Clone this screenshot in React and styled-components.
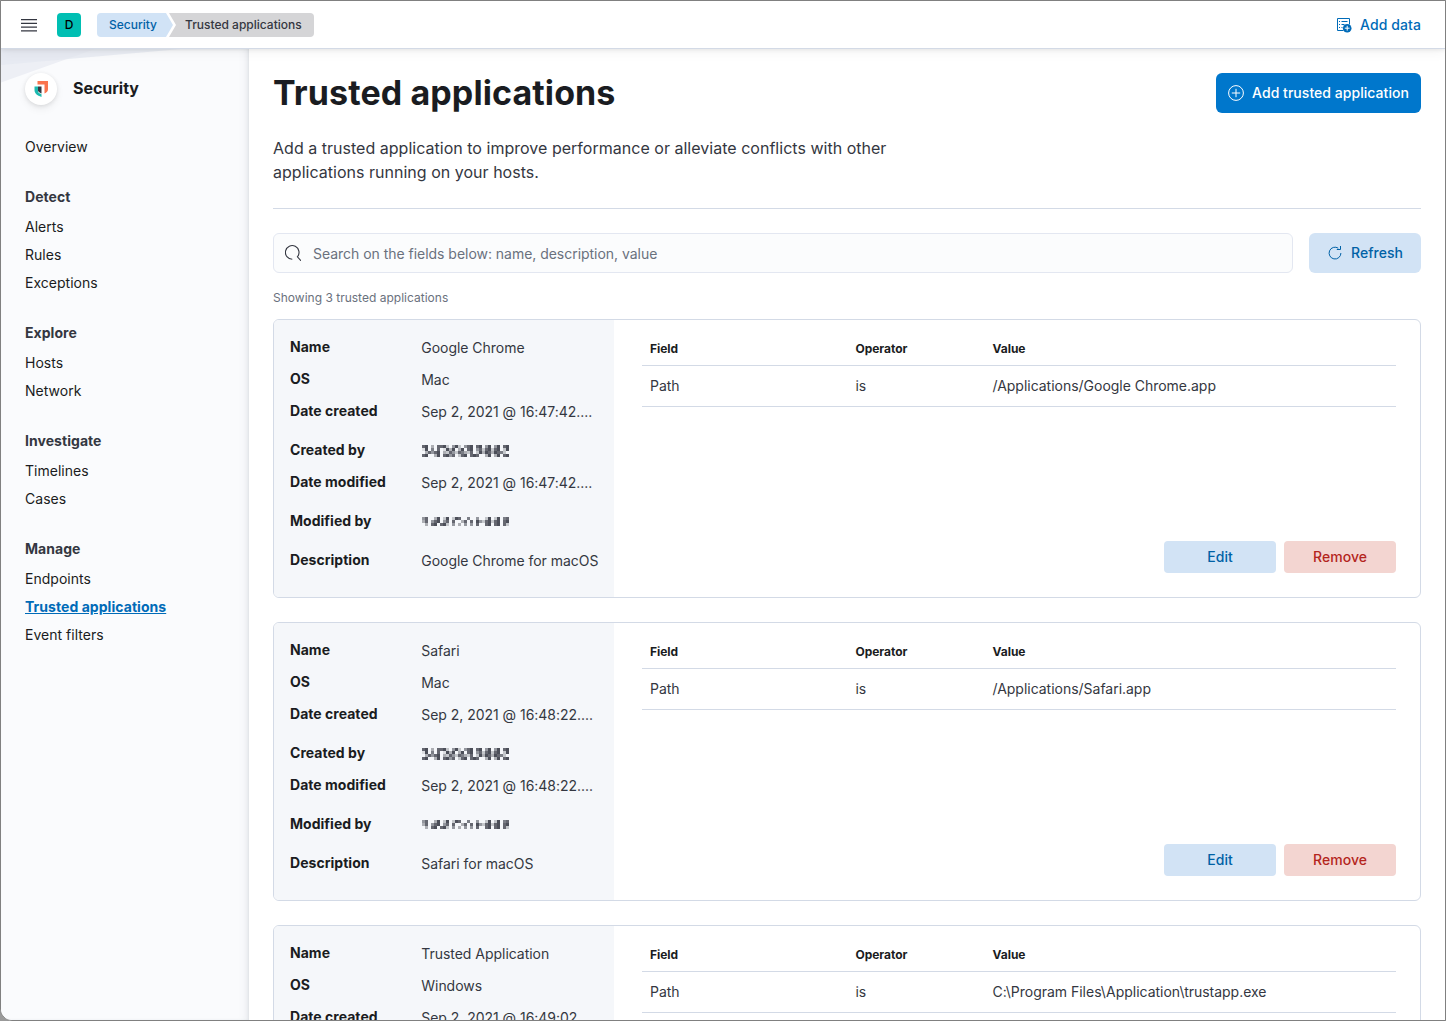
import React from "react";
import styled, { createGlobalStyle, css } from "styled-components";

const GlobalStyle = createGlobalStyle`
  *, *::before, *::after { box-sizing: border-box; }
  html, body { margin: 0; padding: 0; overflow: hidden; }
  body {
    background: #9a9a9a;
    font-family: Inter, "Liberation Sans", sans-serif;
    font-size: 14px;
    line-height: 20px;
    color: #343741;
    letter-spacing: 0;
  }
`;

const Window = styled.div`
  height: 1021px;
  border: 1px solid #808080;
  border-bottom-left-radius: 12px;
  background: #fff;
  overflow: hidden;
  display: flex;
  flex-direction: column;
`;

const Header = styled.header`
  position: relative;
  z-index: 2;
  flex: none;
  height: 48px;
  padding: 1px 24px 0 20px;
  display: flex;
  align-items: center;
  background: #fff;
  border-bottom: 1px solid #d3dae6;
  box-shadow: 0 1px 4px rgba(0, 0, 0, 0.08), 0 3px 12px rgba(0, 0, 0, 0.05);
`;

const MenuIcon = styled.svg`
  display: block;
  width: 16px;
  height: 16px;
`;

const SpaceAvatar = styled.div`
  width: 24px;
  height: 24px;
  margin: 0 16px 0 20px;
  border-radius: 4px;
  background: #00bfb3;
  color: #000;
  font-size: 12px;
  font-weight: 500;
  line-height: 24px;
  text-align: center;
`;

const Breadcrumbs = styled.nav`
  display: flex;
  font-size: 12px;
  font-weight: 500;
  line-height: 24px;
`;

const Crumb = styled.span`
  height: 24px;
  white-space: nowrap;
  ${({ $last }) =>
    $last
      ? css`
          width: 145px;
          margin-left: -4px;
          padding-left: 16px;
          background: #d5d5d7;
          color: #343741;
          border-radius: 0 4px 4px 0;
          clip-path: polygon(0 0, 100% 0, 100% 100%, 0 100%, 7px 50%);
        `
      : css`
          width: 76px;
          padding-left: 12px;
          background: #d1e3f6;
          color: #0061a6;
          border-radius: 4px 0 0 4px;
          clip-path: polygon(0 0, 69px 0, 100% 50%, 69px 100%, 0 100%);
        `}
`;

const AddData = styled.a`
  margin-left: auto;
  display: flex;
  align-items: center;
  gap: 8px;
  color: #006bb8;
  font-weight: 500;
  letter-spacing: 0.08px;
`;

const Body = styled.div`
  flex: 1;
  min-height: 0;
  display: flex;
`;

const Sidebar = styled.aside`
  flex: none;
  position: relative;
  width: 248px;
  padding: 24px;
  background: #fafbfd;
  box-shadow: inset -8px 0 8px -6px rgba(90, 100, 120, 0.13), inset -1px 0 2px rgba(90, 100, 120, 0.08);
`;

const Backdrop = styled.svg`
  position: absolute;
  left: 0;
  top: 0;
  width: 248px;
  height: 40px;
`;

const Brand = styled.div`
  position: relative;
  display: flex;
  align-items: center;
  gap: 16px;
  height: 32px;
`;

const BrandName = styled.span`
  padding-bottom: 2px;
  color: #1a1c21;
  font-size: 16px;
  font-weight: 700;
  letter-spacing: -0.03px;
`;

const BrandBadge = styled.span`
  width: 32px;
  height: 32px;
  border-radius: 50%;
  background: #fff;
  display: flex;
  align-items: center;
  justify-content: center;
  box-shadow: 0 1px 4px rgba(0, 0, 0, 0.1), 0 4px 8px rgba(0, 0, 0, 0.06);
`;

const NavGroup = styled.section`
  margin-top: ${({ $first }) => ($first ? "28px" : "24px")};
`;

const NavTitle = styled.h3`
  margin: 0 0 4px;
  font-size: 14px;
  font-weight: 700;
  line-height: 24px;
  letter-spacing: 0.05px;
  color: #343741;
`;

const NavLink = styled.a`
  display: block;
  height: 28px;
  line-height: 28px;
  color: #1a1c21;
  letter-spacing: 0.02px;
  ${({ $active }) =>
    $active &&
    css`
      color: #006bb8;
      font-weight: 700;
      letter-spacing: 0.05px;
      text-decoration: underline;
    `}
`;

const Main = styled.main`
  flex: 1;
  min-width: 0;
  padding: 24px 24px 0;
`;

const PageHeader = styled.div`
  display: flex;
  justify-content: space-between;
  align-items: flex-start;
  height: 136px;
  border-bottom: 1px solid #d3dae6;
`;

const Title = styled.h1`
  margin: 0;
  font-size: 34px;
  font-weight: 700;
  line-height: 40px;
  letter-spacing: 0.1px;
  color: #1a1c21;
`;

const Lead = styled.p`
  margin: 23px 0 0;
  width: 640px;
  font-size: 16px;
  line-height: 24px;
  letter-spacing: 0.02px;
`;

const tones = {
  solid: css`background: #0077cc; color: #fff;`,
  primary: css`background: #d2e3f5; color: #0061a6;`,
  danger: css`background: #f3d5d1; color: #b4251d;`,
};

const Button = styled.button`
  flex: none;
  display: flex;
  align-items: center;
  justify-content: center;
  gap: 8px;
  width: ${({ $width }) => $width || 112}px;
  height: ${({ $small }) => ($small ? 32 : 40)}px;
  padding: 0;
  border: 0;
  border-radius: ${({ $small }) => ($small ? 4 : 6)}px;
  font: 500 14px/20px Inter, "Liberation Sans", sans-serif;
  letter-spacing: 0.04px;
  ${({ $tone }) => tones[$tone]}
`;

const SearchRow = styled.div`
  display: flex;
  gap: 16px;
  margin-top: 24px;
`;

const SearchField = styled.div`
  flex: 1;
  height: 40px;
  padding: 0 11px;
  display: flex;
  align-items: center;
  gap: 12px;
  border: 1px solid #e3e7f1;
  border-radius: 6px;
  background: #fbfcfd;
`;

const Placeholder = styled.span`
  padding-top: 2px;
  color: #6a717d;
  letter-spacing: -0.03px;
`;

const Count = styled.div`
  margin: 17px 0 13px;
  font-size: 12px;
  line-height: 16px;
  letter-spacing: 0.01px;
  color: #6a717d;
`;

const Card = styled.article`
  display: flex;
  height: 279px;
  margin-bottom: 24px;
  border: 1px solid #d3dae6;
  border-radius: 6px;
  overflow: hidden;
`;

const Summary = styled.dl`
  flex: none;
  width: 340px;
  margin: 0;
  padding: 16px 15px 0 16px;
  background: #f5f7fa;
`;

const SummaryRow = styled.div`
  display: flex;
  height: ${({ $tall }) => ($tall ? 39 : 32)}px;
  padding-top: 1px;
`;

const Term = styled.dt`
  flex: none;
  width: 131.25px;
  color: #1a1c21;
  font-weight: 700;
  letter-spacing: 0.03px;
`;

const Value = styled.dd`
  margin: 1px 0 0;
  white-space: nowrap;
  letter-spacing: -0.03px;
`;

const Mosaic = styled.svg`
  display: block;
  width: 88px;
  height: 14px;
  margin-top: 4px;
`;

const Details = styled.div`
  flex: 1;
  padding: 16px 24px 24px 28px;
  display: flex;
  flex-direction: column;
  justify-content: space-between;
`;

const Conditions = styled.div`
  display: grid;
  grid-template-columns: 205.5px 137px 1fr;
`;

const HeadCell = styled.div`
  height: 30px;
  padding: 3px 8px 0;
  border-bottom: 1px solid #d3dae6;
  color: #1a1c21;
  font-size: 12px;
  font-weight: 700;
  letter-spacing: -0.03px;
`;

const Cell = styled.div`
  height: 41px;
  padding: 10px 8px;
  border-bottom: 1px solid #d3dae6;
  letter-spacing: -0.02px;
`;

const Actions = styled.div`
  display: flex;
  justify-content: flex-end;
  gap: 8px;
`;

const navigation = [
  { title: "Detect", items: ["Alerts", "Rules", "Exceptions"] },
  { title: "Explore", items: ["Hosts", "Network"] },
  { title: "Investigate", items: ["Timelines", "Cases"] },
  { title: "Manage", items: ["Endpoints", "Trusted applications", "Event filters"] },
];

const applications = [
  { name: "Google Chrome", os: "Mac", date: "Sep 2, 2021 @ 16:47:42....", description: "Google Chrome for macOS", path: "/Applications/Google Chrome.app" },
  { name: "Safari", os: "Mac", date: "Sep 2, 2021 @ 16:48:22....", description: "Safari for macOS", path: "/Applications/Safari.app" },
  { name: "Trusted Application", os: "Windows", date: "Sep 2, 2021 @ 16:49:02....", description: "", path: "C:\\Program Files\\Application\\trustapp.exe" },
];

// Each digit is the darkness of one cell of a masked user name.
const masks = {
  created: {
    top: 0,
    rows: [
      "67030667204720467067047047067",
      "17050601737037067046267267027",
      "03646703264265326027376376520",
      "67003706746026706760037037067",
    ],
  },
  modified: {
    top: 1,
    rows: [
      "46003702702760050040027027056",
      "36046704606003606074267267067",
      "03067067204030404060067067062",
    ],
  },
};

function MaskedUser({ kind }) {
  const { top, rows } = masks[kind];
  return (
    <Mosaic viewBox="0 0 88 14">
      {rows.map((row, y) =>
        [...row].map((level, x) => (
          <rect key={`${x}-${y}`} x={1 + x * 3} y={top + y * 3} width="3" height="3" fill="#343741" opacity={Number(level) / 8} shapeRendering="crispEdges" />
        ))
      )}
    </Mosaic>
  );
}

function ApplicationCard({ app }) {
  return (
    <Card>
      <Summary>
        <SummaryRow><Term>Name</Term><Value>{app.name}</Value></SummaryRow>
        <SummaryRow><Term>OS</Term><Value>{app.os}</Value></SummaryRow>
        <SummaryRow $tall><Term>Date created</Term><Value>{app.date}</Value></SummaryRow>
        <SummaryRow><Term>Created by</Term><Value><MaskedUser kind="created" /></Value></SummaryRow>
        <SummaryRow $tall><Term>Date modified</Term><Value>{app.date}</Value></SummaryRow>
        <SummaryRow $tall><Term>Modified by</Term><Value><MaskedUser kind="modified" /></Value></SummaryRow>
        <SummaryRow><Term>Description</Term><Value>{app.description}</Value></SummaryRow>
      </Summary>
      <Details>
        <Conditions>
          <HeadCell>Field</HeadCell>
          <HeadCell>Operator</HeadCell>
          <HeadCell>Value</HeadCell>
          <Cell>Path</Cell>
          <Cell>is</Cell>
          <Cell>{app.path}</Cell>
        </Conditions>
        <Actions>
          <Button $small $tone="primary">Edit</Button>
          <Button $small $tone="danger">Remove</Button>
        </Actions>
      </Details>
    </Card>
  );
}

export default function App() {
  return (
    <>
      <GlobalStyle />
      <Window>
        <Header>
          <MenuIcon viewBox="0 0 16 16">
            <path d="M0 2.700h16M0 6.400h16M0 10.100h16M0 13.800h16" stroke="#343741" strokeWidth="1.300" />
          </MenuIcon>
          <SpaceAvatar>D</SpaceAvatar>
          <Breadcrumbs>
            <Crumb>Security</Crumb>
            <Crumb $last>Trusted applications</Crumb>
          </Breadcrumbs>
          <AddData>
            <svg width="16" height="16" viewBox="0 0 16 16" fill="none" stroke="#006bb8">
              <path d="M7.500 13.500h-6v-12h12v6" />
              <path d="M3 4.500h1M5.500 4.500h6M3 7.500h1M5.500 7.500h3M3 10.500h1M5.500 10.500h1" />
              <circle cx="11.200" cy="11.200" r="4.300" fill="#006bb8" stroke="none" />
              <path d="M11.200 8.800v4.800M8.800 11.200h4.800" stroke="#fff" />
            </svg>
            Add data
          </AddData>
        </Header>
        <Body>
          <Sidebar>
            <Backdrop viewBox="0 0 248 40">
              <path d="M0 0H94L0 33.500z" fill="#edeff5" />
              <path d="M0 0H180L0 16z" fill="#e4e8f0" opacity=".75" />
            </Backdrop>
            <Brand>
              <BrandBadge>
                <svg width="16" height="16" viewBox="0 0 16 16">
                  <path d="M4.500 0H15v8.300c0 2-1.300 3.500-3.500 4.200V3.500H4.500z" fill="#fa744e" />
                  <path d="M1.500 5.500H5v4.800c0 1.200 1.300 2.200 3.500 3V16C4 14.300 1.500 12.500 1.500 9z" fill="#1dbab0" />
                  <path d="M5 5.500h3.500v7C6.200 11.700 5 10.700 5 9.300z" fill="#343741" />
                </svg>
              </BrandBadge>
              <BrandName>Security</BrandName>
            </Brand>
            <NavGroup $first><NavLink>Overview</NavLink></NavGroup>
            {navigation.map((group) => (
              <NavGroup key={group.title}>
                <NavTitle>{group.title}</NavTitle>
                {group.items.map((item) => (
                  <NavLink key={item} $active={item === "Trusted applications"}>{item}</NavLink>
                ))}
              </NavGroup>
            ))}
          </Sidebar>
          <Main>
            <PageHeader>
              <div>
                <Title>Trusted applications</Title>
                <Lead>Add a trusted application to improve performance or alleviate conflicts with other applications running on your hosts.</Lead>
              </div>
              <Button $tone="solid" $width={205}>
                <svg width="16" height="16" viewBox="0 0 16 16" fill="none" stroke="#fff">
                  <circle cx="8" cy="8" r="7.400" />
                  <path d="M8 3.800v8.400M3.800 8h8.400" />
                </svg>
                Add trusted application
              </Button>
            </PageHeader>
            <SearchRow>
              <SearchField>
                <svg width="16" height="16" viewBox="0 0 16 16" fill="none" stroke="#343741" strokeWidth="1.100">
                  <path d="M7.300 14.200A6.800 6.800 0 1 1 12.400 11.800L16 15.800" />
                </svg>
                <Placeholder>Search on the fields below: name, description, value</Placeholder>
              </SearchField>
              <Button $tone="primary">
                <svg width="16" height="16" viewBox="0 0 16 16" fill="none" stroke="#0061a6">
                  <path d="M11.300 3.200A5.900 5.900 0 1 0 13.900 8" />
                  <path d="M13.500 1v3.500H9.800" />
                </svg>
                Refresh
              </Button>
            </SearchRow>
            <Count>Showing 3 trusted applications</Count>
            {applications.map((app) => (
              <ApplicationCard key={app.name} app={app} />
            ))}
          </Main>
        </Body>
      </Window>
    </>
  );
}
